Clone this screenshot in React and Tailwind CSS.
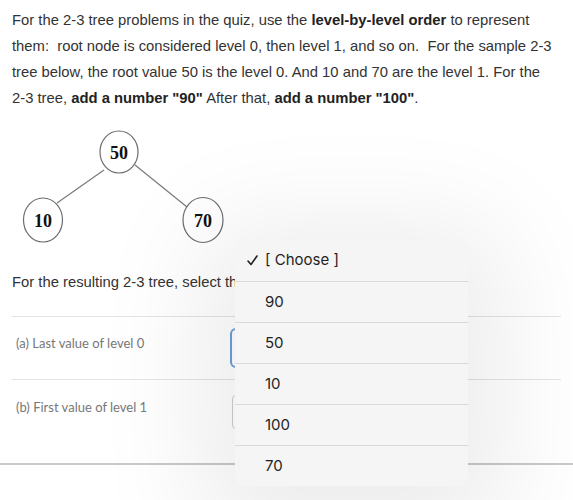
import React from 'react'

const OPTIONS = ['90', '50', '10', '100', '70']

function Tree() {
  // coordinates are page coordinates shifted up by 111px
  const nodes = [
    { x: 119, y: 41, rx: 19, ry: 21, label: '50' },
    { x: 43, y: 109, rx: 19.5, ry: 22, label: '10' },
    { x: 203, y: 109, rx: 20, ry: 22.5, label: '70' },
  ]
  return (
    <svg width="260" height="161" className="block">
      <line x1="104" y1="59" x2="57" y2="92" stroke="#7a7a7a" strokeWidth="1.2" />
      <line x1="135" y1="54" x2="187" y2="96" stroke="#7a7a7a" strokeWidth="1.2" />
      {nodes.map((n) => (
        <g key={n.label}>
          <ellipse cx={n.x} cy={n.y} rx={n.rx} ry={n.ry} fill="white" stroke="#6b6b6b" strokeWidth="1.2" />
          <text
            x={n.x}
            y={n.y + 6.5}
            textAnchor="middle"
            fontFamily="'Liberation Serif', serif"
            fontWeight="700"
            fontSize="18"
            fill="#111"
          >
            {n.label}
          </text>
        </g>
      ))}
    </svg>
  )
}

export default function App() {
  return (
    <div className="relative w-[573px] h-[500px] bg-white overflow-hidden font-['Liberation_Sans',Arial,sans-serif]">
      <p className="px-3 pt-[7px] text-[14.8px] leading-[26px] text-[#333] whitespace-nowrap">
        For the 2-3 tree problems in the quiz, use the <b className="text-[#222]">level-by-level order</b> to represent
        <br />
        them:&nbsp; root node is considered level 0, then level 1, and so on.&nbsp; For the sample 2-3
        <br />
        tree below, the root value 50 is the level 0. And 10 and 70 are the level 1. For the
        <br />
        2-3 tree, <b className="text-[#222]">add a number "90"</b> After that, <b className="text-[#222]">add a number "100"</b>.
      </p>

      <Tree />

      <p className="px-3 text-[14.8px] leading-[20px] text-[#333] whitespace-nowrap">
        For the resulting 2-3 tree, select the correct values.
      </p>

      <div className="mt-[24px] mx-3 w-[549px]">
        <div className="flex h-[64px] border-y border-[#e3e3e3]">
          <div className="w-[218px] pl-1 pt-[17px] text-[13px] leading-[18px] text-[#777] font-['Lato',sans-serif]">
            (a) Last value of level 0
          </div>
          <div className="mt-[11px] h-[40px] w-[200px] rounded-md border-2 border-[#6b9fd9] bg-white"></div>
        </div>
        <div className="flex h-[83px]">
          <div className="w-[220px] pl-1 pt-[18px] text-[13px] leading-[18px] text-[#777] font-['Lato',sans-serif]">
            (b) First value of level 1
          </div>
          <div className="mt-[15px] h-[34px] w-[200px] rounded-sm border border-[#cfcfcf] bg-white"></div>
        </div>
      </div>
      <div className="border-t-2 border-[#c9c9c9]"></div>

      <div className="absolute left-[235px] top-[240px] w-[233px] rounded-[10px] bg-[#f5f5f5] shadow-[0_20px_110px_35px_rgba(0,0,0,0.08)] font-['Inter',sans-serif] text-[15px] text-[#1f1f1f]">
        <div className="flex h-[41px] items-center pl-[12px]">
          <svg width="11" height="11" viewBox="0 0 11 11" className="mr-[7px]">
            <polyline points="1,6 4,9.5 10,1" fill="none" stroke="#222" strokeWidth="1.6" strokeLinecap="round" strokeLinejoin="round" />
          </svg>
          <span>[ Choose ]</span>
        </div>
        {OPTIONS.map((o) => (
          <div key={o} className="flex h-[41px] items-center border-t border-[#d9d9d9] pl-[30px]">
            {o}
          </div>
        ))}
      </div>
    </div>
  )
}
